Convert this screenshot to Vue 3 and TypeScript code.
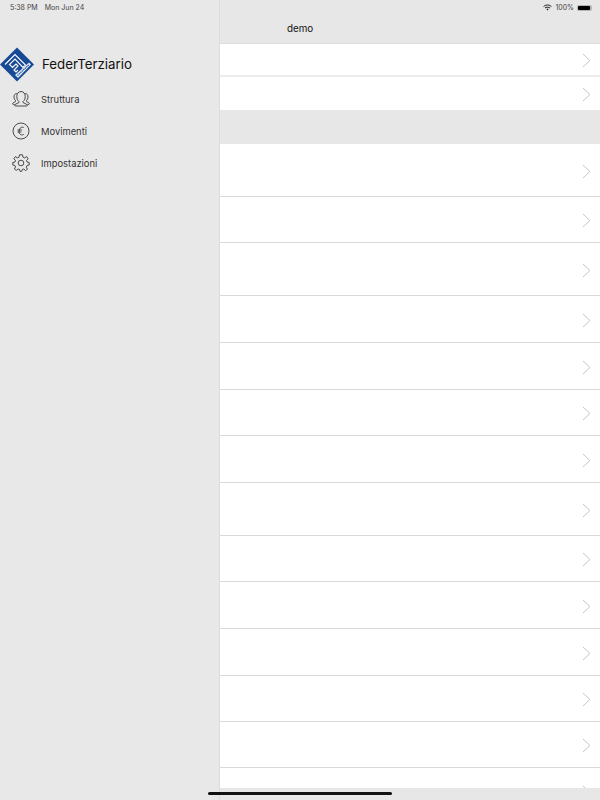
<script setup lang="ts">
const topRows: number[] = [33, 33]
const rows: number[] = [53, 46, 53, 47, 47, 46, 47, 53, 46, 47, 47, 46, 46, 47]
</script>

<template>
  <div class="screen">
    <aside class="side">
      <div class="status-left"><span>5:38 PM</span><span>Mon Jun 24</span></div>
      <div class="brand">
        <svg class="logo" width="35" height="35" viewBox="0 0 35 35">
          <path d="M17 0.5 34 17.500 17 34.500 0 17.500Z" fill="#174a96" />
          <path d="M5 17.500 15 7.500 25.500 18 23 20.500 15 12 9.500 17.500 12.500 20.500 16 17 18 19 14 23 16 25 18 23" fill="none" stroke="#fff" stroke-width="1.100" />
          <path d="M15 28 29 15.500 31 17.500 18 31Z" fill="#dde6f3" />
          <path d="M17.500 28.500 28.800 17.800" stroke="#174a96" stroke-width="1.200" stroke-dasharray="1.300 .7" />
        </svg>
        <span class="brand-name">FederTerziario</span>
      </div>
      <nav class="nav">
        <div class="nav-item">
          <svg width="18" height="18" viewBox="0 0 18 18" fill="none" stroke="#222" stroke-width=".8">
            <path d="M7 11.500C5.200 10 4.800 8.500 4.800 6.500 4.800 3.500 6.500 1.500 9 1.500S13.200 3.500 13.200 6.500C13.200 8.500 12.800 10 11 11.500V12.500L15 14.500C15.800 15 15.500 16 14.500 16H3.500C2.500 16 2.200 15 3 14.500L7 12.500Z" />
            <path d="M4.800 3.500C3 3.500 2 5 2 7 2 8.500 2.500 9.500 3.500 10.500V11.500L1 13C.3 13.500.5 14.500 1.500 14.500H2.500" />
            <path d="M13.200 3.500C15 3.500 16 5 16 7 16 8.500 15.500 9.500 14.500 10.500V11.500L17 13C17.700 13.500 17.500 14.500 16.500 14.500H15.500" />
          </svg>
          <span>Struttura</span>
        </div>
        <div class="nav-item">
          <svg width="18" height="18" viewBox="0 0 18 18" fill="none" stroke="#222" stroke-width=".8">
            <circle cx="9" cy="9" r="8" />
            <path d="M11.800 5.600C10.200 4.500 7.500 5.200 7 9 6.600 12.500 10 13.800 11.800 12.300M5.500 8H10M5.500 10H9.500" />
          </svg>
          <span>Movimenti</span>
        </div>
        <div class="nav-item">
          <svg width="18" height="18" viewBox="0 0 18 18" fill="none" stroke="#222" stroke-width=".8">
            <circle cx="9" cy="9" r="2.800" />
            <path d="M7.500 .8H10.500L11 3.200 12.600 3.900 14.700 2.600 16.200 4.800 14.500 6.400 15 8 17.200 8.500V11L15 11.500 14.300 13.200 15.500 15.200 13.500 16.500 11.800 15 10.300 15.400 9.800 17.300H8L7.500 15.400 6 15 4.200 16.400 2.400 15 3.500 13 2.900 11.500.8 11V8.500L3 8 3.500 6.400 1.800 4.800 3.300 2.600 5.400 3.900 7 3.200Z" />
          </svg>
          <span>Impostazioni</span>
        </div>
      </nav>
    </aside>
    <main class="detail">
      <header class="head">
        <div class="status-right">
          <svg width="9" height="7" viewBox="0 0 9 7" fill="none" stroke="#111" stroke-width="1">
            <path d="M.6 2.500C2.800.5 6.200.5 8.400 2.500M2 4C3.300 2.900 5.700 2.900 7 4" />
            <path d="M3.500 5.200 4.500 6.500 5.500 5.200C5 4.700 4 4.700 3.500 5.200Z" fill="#111" stroke="none" />
          </svg>
          <span>100%</span>
          <span class="battery"><span class="battery-fill"></span></span>
        </div>
        <div class="title">demo</div>
      </header>
      <section class="list">
        <div v-for="(h, i) in topRows" :key="'t' + i" class="row top-row" :style="{ height: h + 'px' }">
          <svg class="chev" width="9" height="15" viewBox="0 0 9 15" fill="none" stroke="#c6c6c8" stroke-width="1"><path d="M1 1 8 7.500 1 14" /></svg>
        </div>
      </section>
      <div class="gap"></div>
      <section class="list">
        <div v-for="(h, i) in rows" :key="'r' + i" class="row" :style="{ height: h + 'px' }">
          <svg class="chev" width="9" height="15" viewBox="0 0 9 15" fill="none" stroke="#c6c6c8" stroke-width="1"><path d="M1 1 8 7.500 1 14" /></svg>
        </div>
      </section>
      <div class="bottom-bar"></div>
    </main>
    <div class="home"></div>
  </div>
</template>

<style scoped>
.screen {
  position: relative;
  display: flex;
  width: 600px;
  height: 800px;
  overflow: hidden;
  background: #e8e8e8;
  font-family: Inter, "Liberation Sans", sans-serif;
  color: #111;
}
.side {
  width: 219px;
  flex: none;
  border-right: 1px solid #dcdcdc;
  display: flex;
  flex-direction: column;
}
.status-left {
  display: flex;
  gap: 7px;
  padding: 3px 0 0 10px;
  height: 14px;
  font-size: 7px;
  line-height: 9px;
  color: #444;
}
.brand {
  display: flex;
  align-items: center;
  gap: 7px;
  margin-top: 30px;
  height: 35px;
}
.logo {
  flex: none;
}
.brand-name {
  font-size: 13.300px;
  line-height: 16px;
  margin-top: -1px;
  font-weight: 400;
  color: #111;
}
.nav {
  display: flex;
  flex-direction: column;
  margin-top: 1px;
}
.nav-item {
  display: flex;
  align-items: center;
  height: 32px;
  padding-left: 12px;
  gap: 11px;
  font-size: 9.400px;
  color: #333;
}
.detail {
  position: relative;
  flex: 1;
  display: flex;
  flex-direction: column;
  min-width: 0;
  overflow: hidden;
}
.head {
  position: relative;
  height: 44px;
  flex: none;
  background: #e7e7e7;
  border-bottom: 1px solid #dcdcdc;
  box-sizing: border-box;
}
.status-right {
  position: absolute;
  top: 3px;
  right: 8px;
  display: flex;
  align-items: center;
  gap: 3px;
  font-size: 7px;
  line-height: 9px;
  color: #444;
}
.battery {
  display: block;
  width: 15px;
  height: 6px;
  margin-left: 0;
  padding: 1px 2px 1px 1px;
  border-radius: 2px;
  background: #b5b5b5;
  box-sizing: border-box;
}
.battery-fill {
  display: block;
  height: 100%;
  background: #000;
  border-radius: 1px;
}
.title {
  position: absolute;
  top: 23px;
  left: 67px;
  font-size: 9.800px;
  line-height: 12px;
  color: #111;
}
.list {
  background: #fff;
  flex: none;
}
.row {
  display: flex;
  align-items: center;
  justify-content: flex-end;
  padding: 2px 9px 0 0;
  box-sizing: border-box;
  border-bottom: 1px solid #d9d9d9;
}
.top-row {
  border-bottom: 2px solid #ededed;
}
.top-row:last-child {
  border-bottom: 0;
}
.gap {
  height: 34px;
  flex: none;
  background: #e7e7e7;
}
.bottom-bar {
  position: absolute;
  left: 0;
  right: 0;
  bottom: 0;
  height: 12px;
  background: #e7e7e7;
}
.home {
  position: absolute;
  left: 208px;
  bottom: 5px;
  width: 184px;
  height: 3px;
  border-radius: 2px;
  background: #111;
}
</style>
